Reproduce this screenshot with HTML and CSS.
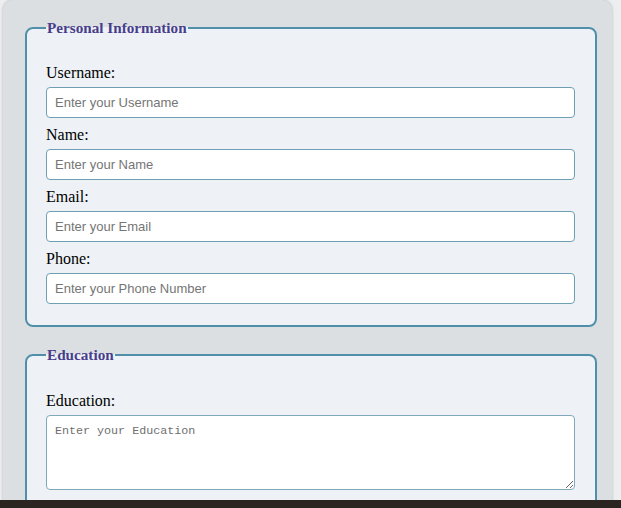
FILE: index.html
```html
<!DOCTYPE html>
<html>
<head>
<meta charset="utf-8">
<link rel="stylesheet" href="styles.css">
</head>
<body>
<div class="container">
  <form class="form">
    <fieldset class="group">
      <legend class="group-title">Personal Information</legend>
      <label class="field-label" for="username">Username:</label>
      <input class="field-input" id="username" type="text" placeholder="Enter your Username">
      <label class="field-label" for="name">Name:</label>
      <input class="field-input" id="name" type="text" placeholder="Enter your Name">
      <label class="field-label" for="email">Email:</label>
      <input class="field-input" id="email" type="email" placeholder="Enter your Email">
      <label class="field-label" for="phone">Phone:</label>
      <input class="field-input" id="phone" type="tel" placeholder="Enter your Phone Number">
    </fieldset>
    <fieldset class="group group-edu">
      <legend class="group-title">Education</legend>
      <label class="field-label" for="education">Education:</label>
      <textarea class="field-area" id="education" placeholder="Enter your Education"></textarea>
    </fieldset>
  </form>
</div>
<div class="taskbar"></div>
</body>
</html>
```
FILE: styles.css
```css
html, body {
  margin: 0;
  padding: 0;
}
body {
  background: #eceef0;
  font-family: "Liberation Serif", "Times New Roman", serif;
  overflow: hidden;
  height: 508px;
}
.container {
  margin-left: 3px;
  width: 609px;
  box-sizing: border-box;
  background: #dcdfe2;
  border-radius: 10px 10px 0 0;
  box-shadow: 0 0 3px rgba(0, 0, 0, 0.25);
  padding: 19px 15px 40px 22px;
  min-height: 560px;
}
.form {
  display: flex;
  flex-direction: column;
  gap: 19px;
}
.group {
  margin: 0;
  border: 2px solid #4f8fa9;
  border-radius: 8px;
  background: #eef2f6;
  padding: 27px 20px 13px 19px;
  display: flex;
  flex-direction: column;
}
.group-edu {
  padding-top: 28px;
}
.group-title {
  font-family: "Liberation Serif", "Times New Roman", serif;
  font-weight: bold;
  font-size: 15.2px;
  color: #483d8b;
  padding: 0 1px;
}
.field-label {
  display: block;
  font-size: 16px;
  line-height: 18px;
  color: #000;
  margin-bottom: 5px;
}
.field-input {
  height: 31px;
  box-sizing: border-box;
  border: 1px solid #6f9fb3;
  border-radius: 4px;
  background: #fff;
  padding: 0 8px;
  font-family: "Liberation Sans", Arial, sans-serif;
  font-size: 13px;
  margin: 0 0 8px 0;
  outline: none;
}
.field-input::placeholder {
  color: #757575;
}
.field-area {
  height: 75px;
  box-sizing: border-box;
  border: 1px solid #7fa9ba;
  border-radius: 4px;
  background: #fff;
  padding: 8px 8px;
  font-family: "Liberation Mono", "Courier New", monospace;
  font-size: 11.7px;
  margin: 0 0 8px 0;
  resize: vertical;
  outline: none;
}
.field-area::placeholder {
  color: #6f6f6f;
}
.taskbar {
  position: fixed;
  left: 0;
  right: 0;
  bottom: 0;
  height: 8px;
  background: #2a2521;
}
```
